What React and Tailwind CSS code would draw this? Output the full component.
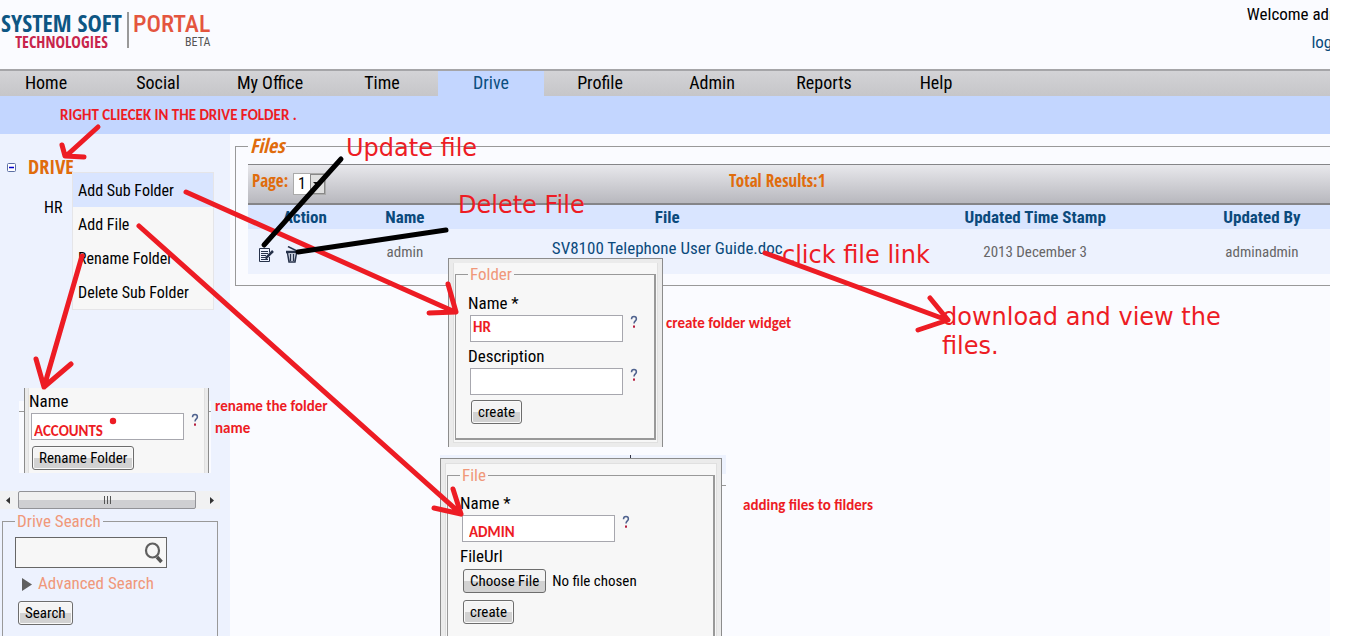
import React from "react";

const narrow = "font-['Roboto_Condensed','DejaVu_Sans_Condensed',sans-serif]";
const strong = "font-['Open_Sans_Condensed','Roboto_Condensed',sans-serif] font-bold";

const tabs = [
  { label: "Home", cls: "w-[102px] pr-[10px]" },
  { label: "Social", cls: "w-28" },
  { label: "My Office", cls: "w-28" },
  { label: "Time", cls: "w-28" },
  { label: "Drive", cls: "w-[106px] bg-[#c3d6ff] text-[#0b4f80]" },
  { label: "Profile", cls: "w-28" },
  { label: "Admin", cls: "w-28" },
  { label: "Reports", cls: "w-28" },
  { label: "Help", cls: "w-28" },
];

function Button({ children }) {
  return (
    <button
      type="button"
      className="h-6 rounded-[3px] border border-[#6d6d6d] bg-linear-to-b from-[#f4f4f4] from-50% to-[#d2d2d2] to-50% px-1.5 text-[15px] leading-5 text-black shadow-[inset_0_0_0_1px_#fafafa]"
    >
      {children}
    </button>
  );
}

function Hint() {
  return (
    <svg className="size-3.5" viewBox="0 0 14 14" aria-hidden="true">
      <path d="M4.5 4.2C4.5 2.4 5.6 1.6 7 1.6S9.4 2.5 9.4 4C9.4 5.8 7 6.1 7 8.6" fill="none" stroke="#4f628e" strokeWidth="1.500" />
      <rect x="6" y="10.500" width="2" height="2.200" fill="#b51f3f" />
    </svg>
  );
}

function Field({ id, label, value, required, pad = "" }) {
  return (
    <div className="flex flex-col">
      <label htmlFor={id} className="h-6 text-[17px] leading-6">
        {label}
        {required && <span> *</span>}
      </label>
      <div className="flex items-start gap-1 pl-0.5">
        <input
          id={id}
          defaultValue={value}
          className={`h-[27px] w-[153px] border border-[#a7a7ae] bg-white px-0.5 font-['Carlito','Lato',sans-serif] text-[15px] font-bold text-[#ed1c24] outline-none ${pad}`}
        />
        <Hint />
      </div>
    </div>
  );
}

function Note({ className, children }) {
  return <p className={`absolute whitespace-nowrap text-[#ed1c24] ${className}`}>{children}</p>;
}

const small = "font-['Carlito','Lato',sans-serif] text-[15px] font-bold";
const big = "font-['DejaVu_Sans',sans-serif] text-[24px] leading-[29px]";

function Logo() {
  return (
    <div className="flex h-[69px] items-start pt-3">
      <div className={`flex h-9 w-[129px] flex-col items-center border-r-2 border-[#999] pr-1 ${strong}`}>
        <span className="text-[24px] leading-[22px] whitespace-nowrap text-[#0d5684]">SYSTEM SOFT</span>
        <span className="text-[16px] leading-4 text-[#c8244b]">TECHNOLOGIES</span>
      </div>
      <div className="flex flex-col items-end pl-1">
        <span className="text-[24px] leading-6 font-medium text-[#e4553f]">PORTAL</span>
        <span className="text-[12px] leading-3 text-[#555]">BETA</span>
      </div>
    </div>
  );
}

function ContextMenu() {
  return (
    <ul className="absolute top-[172px] left-[72px] w-[142px] border border-[#e5e5e8] bg-[#f7f7f7] text-[16px]">
      {["Add Sub Folder", "Add File", "Rename Folder", "Delete Sub Folder"].map((t, i) => (
        <li key={t}>
          <button type="button" className={`h-[34px] w-full px-[5px] pt-0.5 text-left whitespace-nowrap ${i === 0 ? "bg-[#d9e5ff]" : ""}`}>
            {t}
          </button>
        </li>
      ))}
    </ul>
  );
}

function Sidebar() {
  return (
    <aside className="flex w-[230px] shrink-0 flex-col bg-[#edf2fe]">
      <div className="flex h-[254px] flex-col pt-[21px]">
        <div className="flex h-6 items-center gap-3 pl-[7px]">
          <svg className="size-[9px]" viewBox="0 0 9 9" aria-hidden="true">
            <rect x=".5" y=".5" width="8" height="8" rx="1" fill="#fff" stroke="#5c6fa3" />
            <path d="M2 4.500h5" stroke="#00c" strokeWidth="1.500" />
          </svg>
          <a href="#drive" className={`text-[20px] text-[#e06c0c] ${strong}`}>DRIVE</a>
        </div>
        <a href="#hr" className="mt-[17px] pl-11 text-[16px] leading-6">HR</a>
      </div>
      <div className="ml-[19px] flex h-[85px] w-[192px] bg-linear-to-b from-[#edf2fe] from-15% to-[#fafbff] to-15%">
        <div className="mt-[23px] h-px w-[5px] bg-[#999]" />
        <div className="flex-1 border-x border-[#8c8c8c] bg-[#ebebeb] px-[3px]">
          <form className="flex h-full flex-col border-x border-[#e0e0e0] bg-[#f7f7f7] pt-px">
            <Field id="rename" label="Name" value="ACCOUNTS" pad="pt-2" />
            <div className="pt-1.5 pl-[3px]">
              <Button>Rename Folder</Button>
            </div>
          </form>
        </div>
        <div className="mt-[23px] h-px w-0.5 bg-[#999]" />
      </div>
      <div className="mt-[18px] flex h-[18px] w-[220px] items-center bg-[#f1f1f2]">
        <svg className="h-4 w-[18px]" viewBox="0 0 18 16" aria-hidden="true"><path d="M10 5v7L6 8.500z" fill="#333" /></svg>
        <div className="flex h-full flex-1 items-center justify-center gap-0.5 rounded-[2px] border border-[#929297] bg-linear-to-b from-[#f0f0f0] from-50% to-[#cfcfd2] to-50%">
          {[0, 1, 2].map((i) => <span key={i} className="h-2 w-px bg-[#555]" />)}
        </div>
        <svg className="h-4 w-6" viewBox="0 0 24 16" aria-hidden="true"><path d="M14 5v7L18 8.500z" fill="#333" /></svg>
      </div>
      <fieldset className="ml-0.5 flex w-[216px] flex-1 flex-col border border-b-0 border-[#999] px-3 pt-1">
        <legend className="px-0.5 text-[17px] leading-6 text-[#f0987a]">Drive Search</legend>
        <div className="flex flex-col items-start">
          <label className="flex h-[31px] w-[152px] items-center border border-[#666] bg-[#f7f7f7]">
            <input aria-label="Drive search" className="h-full w-32 bg-transparent px-1 outline-none" />
            <svg className="h-6 w-5" viewBox="0 0 20 24" aria-hidden="true">
              <ellipse cx="8.500" cy="9.500" rx="6.500" ry="7" fill="none" stroke="#606060" strokeWidth="2.200" />
              <path d="M13 16l4.500 5" stroke="#555" strokeWidth="3.500" />
            </svg>
          </label>
          <button type="button" className="flex h-8 items-center gap-1.5 pl-[7px] text-[17px] text-[#f0987a]">
            <svg className="h-[13px] w-2.5" viewBox="0 0 10 13" aria-hidden="true"><path d="M0 0v13l10-6.500z" fill="#606060" /></svg>
            Advanced Search
          </button>
          <div className="pt-px pl-[3px]">
            <Button>Search</Button>
          </div>
        </div>
      </fieldset>
    </aside>
  );
}

function Files() {
  return (
    <main className="min-w-0 flex-1 pl-[5px]">
      <fieldset className="min-w-0 border border-r-0 border-[#999] pt-1.5 pb-[11px] pl-3">
        <legend className={`px-0.5 text-[20px] leading-6 text-[#e06c0c] italic ${strong}`}>Files</legend>
        <div className={`flex h-[41px] items-start border-t border-b-2 border-[#858588] bg-linear-to-b from-[#e8e8ec] to-[#b8b8be] text-[17px] text-[#e06c0c] ${strong}`}>
          <div className="flex w-[200px] items-start gap-1 pt-2 pl-1">
            <label htmlFor="page" className="w-[37px] leading-4 whitespace-nowrap">Page:</label>
            <div className="flex h-[22px] w-[33px] border border-[#aaa] bg-white text-black">
              <select id="page" className="w-4 appearance-none pl-1 font-['Roboto_Condensed',sans-serif] text-[16px] leading-5 font-normal">
                <option>1</option>
              </select>
              <span className="flex w-4 items-center justify-center border border-[#888] bg-[#e0e0e0]">
                <svg className="h-1 w-2" viewBox="0 0 8 4" aria-hidden="true"><path d="M0 0h8L4 4z" fill="#111" /></svg>
              </span>
            </div>
          </div>
          <span className="flex-1 pt-2 pl-[281px] leading-4">Total Results:1</span>
        </div>
        <table className="w-full table-fixed text-center">
          <thead>
            <tr className="h-6 bg-[#d9e5ff] text-[17px] leading-6 text-[#0b4a7c]">
              <th className="w-[10.5%]">Action</th>
              <th className="w-[8%]">Name</th>
              <th className="w-[40.5%]">File</th>
              <th className="w-[27.500%]">Updated Time Stamp</th>
              <th className="pl-2.5">Updated By</th>
            </tr>
          </thead>
          <tbody>
            <tr className="h-[45px] bg-[#edf2fe] text-[15px] text-[#666]">
              <td>
                <div className="flex gap-2.5 pt-1.5 pl-2.5">
                  <button type="button" aria-label="Update file">
                    <svg className="h-4 w-[17px]" viewBox="0 0 17 16" fill="none" stroke="#26324a">
                      <path d="M11.500 10v4.500h-10v-13h10v4" />
                      <path d="M3 4.500h7M3 6.500h7M3 8.500h5M3 10.500h4M3 12.500h7" />
                      <path d="M7.500 11.500L15 4" strokeWidth="2.500" />
                    </svg>
                  </button>
                  <button type="button" aria-label="Delete file">
                    <svg className="h-[18px] w-3.5" viewBox="0 0 14 18" fill="none" stroke="#26324a">
                      <path d="M3 .5l8 4" strokeWidth="1.500" />
                      <path d="M1 6h12" strokeWidth="2.500" />
                      <path d="M2.500 7l1.500 9h6l1.500-9M5.500 8v7M8.500 8v7" strokeWidth="1.500" />
                    </svg>
                  </button>
                </div>
              </td>
              <td className="pt-0.5">admin</td>
              <td className="pb-1.5 text-[17px] whitespace-nowrap">
                <a href="#file" className="text-[#0b4a7c]">SV8100 Telephone User Guide.doc</a>
              </td>
              <td className="pt-0.5">2013 December 3</td>
              <td className="pt-0.5 pl-2.5">adminadmin</td>
            </tr>
          </tbody>
        </table>
      </fieldset>
    </main>
  );
}

function FolderDialog() {
  return (
    <div className="absolute top-[258px] left-[448px] w-[215px] border border-b-0 border-[#8c8c8c] bg-[#ebebeb] p-1">
      <form className="border border-t-0 border-[#e0e0e0] bg-[#f7f7f7] px-px pb-0.5">
        <fieldset className="border border-r-2 border-b-2 border-[#999] px-3 pt-1.5 pb-3.5">
          <legend className="px-0.5 text-[17px] leading-[22px] text-[#f0987a]">Folder</legend>
          <div className="flex flex-col gap-0.5">
            <Field id="folder" label="Name" value="HR" required pad="pb-1" />
            <Field id="description" label="Description" value="" />
          </div>
          <div className="pt-[5px] pl-[3px]"><Button>create</Button></div>
        </fieldset>
      </form>
    </div>
  );
}

function FileDialog() {
  return (
    <div className="absolute top-[455px] bottom-0 left-[440px] flex w-[286px] flex-col items-start overflow-hidden">
      <div className="h-[3px] w-full bg-[#edf2fe] pl-[190px]">
        <div className="h-full w-px bg-[#334]" />
      </div>
      <div className="flex w-full flex-1">
        <div className="w-[282px] shrink-0 border border-b-0 border-[#8c8c8c] bg-[#ebebeb] p-1 pb-0">
          <form className="flex h-full flex-col border border-b-0 border-[#e0e0e0] bg-[#f7f7f7] px-px">
            <fieldset className="flex-1 border border-r-2 border-b-0 border-[#999] px-3 pt-[5px]">
              <legend className="px-0.5 text-[17px] leading-[22px] text-[#f0987a]">File</legend>
              <Field id="filename" label="Name" value="ADMIN" required pad="pl-1.5 pt-1.5" />
              <label htmlFor="fileurl" className="block h-6 text-[17px] leading-7">FileUrl</label>
              <input
                id="fileurl"
                type="file"
                className="mt-[3px] ml-[3px] block w-[210px] text-[15px] leading-6 file:mr-1.5 file:h-6 file:rounded-[3px] file:border file:border-solid file:border-[#6d6d6d] file:bg-linear-to-b file:from-[#f4f4f4] file:from-50% file:to-[#d2d2d2] file:to-50% file:px-1.5 file:leading-5"
              />
              <div className="pt-[7px] pl-[3px]"><Button>create</Button></div>
            </fieldset>
          </form>
        </div>
        <div className="h-7 flex-1 border-b border-[#999] bg-linear-to-b from-[#edf2fe] from-60% to-[#fafbff] to-60%" />
      </div>
    </div>
  );
}

function Annotations() {
  return (
    <div className="pointer-events-none absolute inset-0">
      <svg className="absolute top-0 left-0" width="1330" height="636" fill="none" stroke="#ed1c24" strokeWidth="5" strokeLinecap="round" strokeLinejoin="round" aria-hidden="true">
        <path d="M98 127L66 156M62 145L65 156L84 157" />
        <path d="M186 192L455 312M448 284L456 312L429 313" />
        <path d="M139 226L461 514M453 489L461 514L434 508" />
        <path d="M82 256L44 387M36 359L44 387L71 364" />
        <path d="M765 253L947 320M930 298L948 320L918 330" />
        <path d="M341 159L264 245M446 230L298 252" stroke="#000" />
        <circle cx="113" cy="421" r="3.200" fill="#ed1c24" stroke="none" />
      </svg>
      <Note className={`${small} top-[104px] left-[60px]`}>RIGHT CLIECEK IN THE DRIVE FOLDER .</Note>
      <Note className={`${big} top-[134px] left-[346px]`}>Update file</Note>
      <Note className={`${big} top-[191px] left-[458px]`}>Delete File</Note>
      <Note className={`${big} top-[241px] left-[782px]`}>click file link</Note>
      <Note className={`${big} top-[303px] left-[942px]`}>download and view the<br />files.</Note>
      <Note className={`${small} top-[312px] left-[666px]`}>create folder widget</Note>
      <Note className={`${small} top-[395px] left-[215px] leading-[22px]`}>rename the folder<br />name</Note>
      <Note className={`${small} top-[494px] left-[743px]`}>adding files to filders</Note>
    </div>
  );
}

export default function App() {
  return (
    <div className={`${narrow} flex min-h-screen bg-white pr-[30px] text-black`}>
      <div className="relative flex min-w-0 flex-1 flex-col overflow-hidden bg-[#fafbff]">
        <header className="flex justify-between">
          <Logo />
          <div className="-mr-6 flex flex-col items-end text-[17px] leading-7 whitespace-nowrap">
            <span>Welcome admin</span>
            <a href="#logout" className="text-[#0b4a7c]">logout</a>
          </div>
        </header>
        <nav className="flex h-[27px] border-t-2 border-[#a5a5a8] bg-linear-to-b from-[#d3d3d6] to-[#c6c6c9] text-[18px] leading-[23px]">
          {tabs.map((t) => (
            <a key={t.label} href={`#${t.label}`} className={`text-center ${t.cls}`}>{t.label}</a>
          ))}
        </nav>
        <div className="h-[38px] bg-[#c3d6ff]" />
        <div className="flex flex-1">
          <Sidebar />
          <Files />
        </div>
        <ContextMenu />
        <FolderDialog />
        <FileDialog />
        <Annotations />
      </div>
    </div>
  );
}
